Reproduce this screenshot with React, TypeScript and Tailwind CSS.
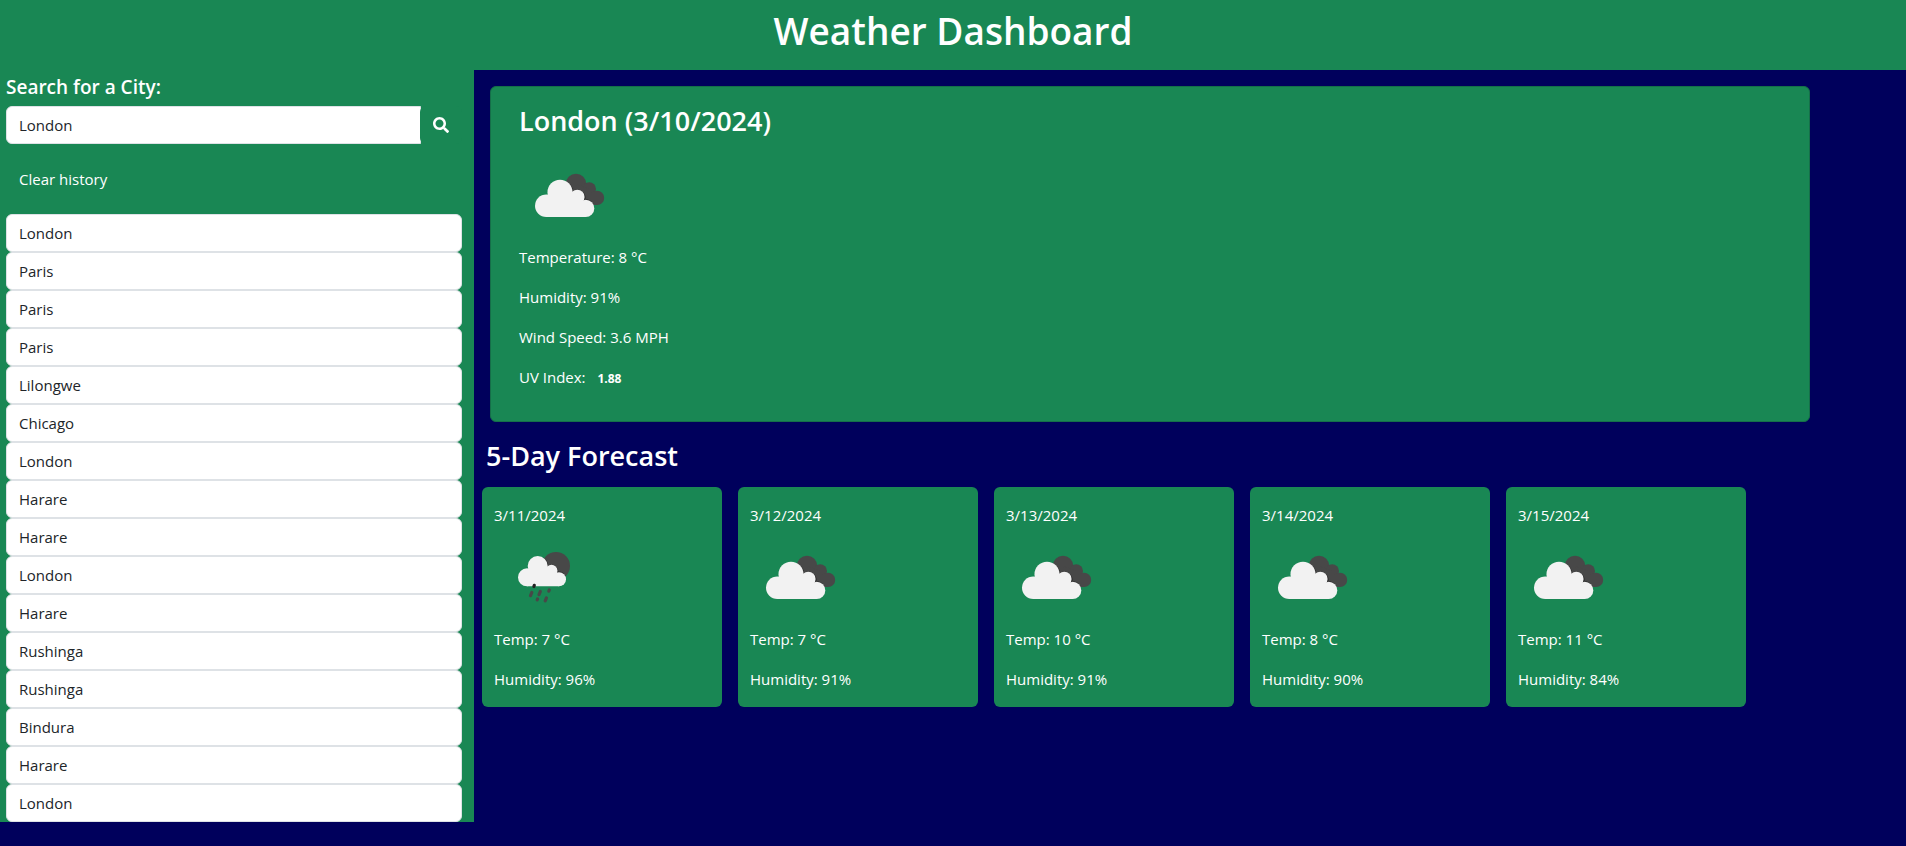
import { FaSearch } from "react-icons/fa";

const historyItems = [
  "London", "Paris", "Paris", "Paris", "Lilongwe", "Chicago", "London", "Harare",
  "Harare", "London", "Harare", "Rushinga", "Rushinga", "Bindura", "Harare", "London",
];

type Sky = "clouds" | "rain";

const forecast: { date: string; sky: Sky; temp: number; humidity: number }[] = [
  { date: "3/11/2024", sky: "rain", temp: 7, humidity: 96 },
  { date: "3/12/2024", sky: "clouds", temp: 7, humidity: 91 },
  { date: "3/13/2024", sky: "clouds", temp: 10, humidity: 91 },
  { date: "3/14/2024", sky: "clouds", temp: 8, humidity: 90 },
  { date: "3/15/2024", sky: "clouds", temp: 11, humidity: 84 },
];

function CloudsIcon() {
  return (
    <svg viewBox="0 0 100 100" className="block size-[100px]" role="img" aria-label="Broken clouds">
      <g fill="#484848">
        <circle cx="57" cy="39" r="10.3" />
        <circle cx="70.2" cy="44" r="6.8" />
        <circle cx="78" cy="52.9" r="7.2" />
        <path d="M57 39 L70 44 L78 60.1 L60 60 Z" />
      </g>
      <path d="M48 36.8 A13.3 13.3 0 0 1 54.3 46 A8.1 8.1 0 0 1 66.5 54 A9.4 9.4 0 0 1 73.8 58.6 L60 62 L46 50 Z" fill="#2a2a2a" />
      <g fill="#f2f2f2">
        <circle cx="27.3" cy="60.7" r="11.3" />
        <circle cx="41" cy="47.2" r="12.5" />
        <circle cx="58.3" cy="52" r="7.3" />
        <circle cx="66.7" cy="63.4" r="8.6" />
        <path d="M27.3 72 V55 L41 47 L58 52 L66.7 60 V72 Z" />
      </g>
    </svg>
  );
}

function RainIcon() {
  return (
    <svg viewBox="0 0 100 100" className="block size-[100px]" role="img" aria-label="Rain">
      <circle cx="62" cy="39" r="14" fill="#484848" />
      <path d="M49 30.5 A11 11 0 0 1 54.3 38.4 A7 7 0 0 1 64.3 44.6 A8 8 0 0 1 71.5 49 L60 54 L46 44 Z" fill="#2a2a2a" />
      <g fill="#f2f2f2">
        <circle cx="33" cy="50.3" r="9" />
        <circle cx="43.7" cy="39" r="10" />
        <circle cx="57.5" cy="43.7" r="6" />
        <circle cx="65" cy="52.3" r="7" />
        <path d="M33 59.3 V46 L44 39 L57.5 43 L65 50 V59.3 Z" />
      </g>
      <g stroke="#484848" strokeWidth="3.2" strokeLinecap="round">
        <path d="M37.8 65.5 L36.5 68.7" />
        <path d="M46.3 64.5 L45 67.7" />
        <path d="M55.3 63 L54.8 64.2" />
        <path d="M43.6 71.9 L43.2 72.9" />
        <path d="M52.4 71 L51.2 73.8" />
        <path d="M40.3 58.3 L39.9 59.5" stroke="#222222" />
      </g>
    </svg>
  );
}

function SkyIcon({ sky }: { sky: Sky }) {
  return sky === "rain" ? <RainIcon /> : <CloudsIcon />;
}

export default function App() {
  return (
    <div className="min-h-screen bg-[#00005c] font-['Open_Sans','Noto_Sans',sans-serif] text-[15px] leading-6 text-white">
      <header className="bg-[#198754] px-3 pt-[7px] pb-[15px] text-center">
        <h1 className="text-[37px] leading-[48px] font-semibold">Weather Dashboard</h1>
      </header>

      <div className="flex items-start pr-[10px]">
        <aside className="w-1/4 shrink-0 bg-[#198754] pt-1 pr-3 pl-[6px]">
          <form onSubmit={(e) => e.preventDefault()}>
            <label htmlFor="city" className="mb-[6px] block text-[19px] leading-[26px] font-semibold">
              Search for a City:
            </label>
            <div className="flex">
              <input
                id="city"
                type="text"
                defaultValue="London"
                className="h-[38px] min-w-0 flex-1 rounded-l-md border border-[#dee2e6] bg-white px-3 text-[#212529] outline-none"
              />
              <button
                type="submit"
                aria-label="Search"
                className="-ml-px flex h-[38px] w-[42px] items-center justify-center rounded-md bg-[#198754]"
              >
                <FaSearch className="size-4" />
              </button>
            </div>
            <button type="button" className="my-4 block h-[38px] px-[13px]">
              Clear history
            </button>
          </form>
          <ul>
            {historyItems.map((city, i) => (
              <li key={i}>
                <input
                  type="text"
                  readOnly
                  aria-label={`History entry ${i + 1}`}
                  defaultValue={city}
                  className="block h-[38px] w-full rounded-md border border-[#dee2e6] bg-white px-3 text-[#212529] outline-none"
                />
              </li>
            ))}
          </ul>
        </aside>

        <main className="min-w-0 flex-1">
          <section className="mx-4 mt-4 max-w-[1320px] rounded-md border border-[#156f49] bg-[#198754] px-7 py-4">
            <h2 className="mb-[6px] text-[27px] leading-[36px] font-semibold">London (3/10/2024)</h2>
            <SkyIcon sky="clouds" />
            <div className="mb-4 space-y-4">
              <p>Temperature: 8 °C</p>
              <p>Humidity: 91%</p>
              <p>Wind Speed: 3.6 MPH</p>
              <p>
                UV Index: <span className="px-2 text-xs font-bold">1.88</span>
              </p>
            </div>
          </section>

          <h2 className="mt-4 mb-[13px] px-3 text-[27px] leading-[36px] font-semibold">5-Day Forecast</h2>

          <div className="flex flex-wrap gap-4 px-2">
            {forecast.map((day) => (
              <article key={day.date} className="w-60 rounded-md bg-[#198754] px-3 py-4">
                <h3>{day.date}</h3>
                <SkyIcon sky={day.sky} />
                <div className="space-y-4">
                  <p>Temp: {day.temp} °C</p>
                  <p>Humidity: {day.humidity}%</p>
                </div>
              </article>
            ))}
          </div>
        </main>
      </div>
    </div>
  );
}
